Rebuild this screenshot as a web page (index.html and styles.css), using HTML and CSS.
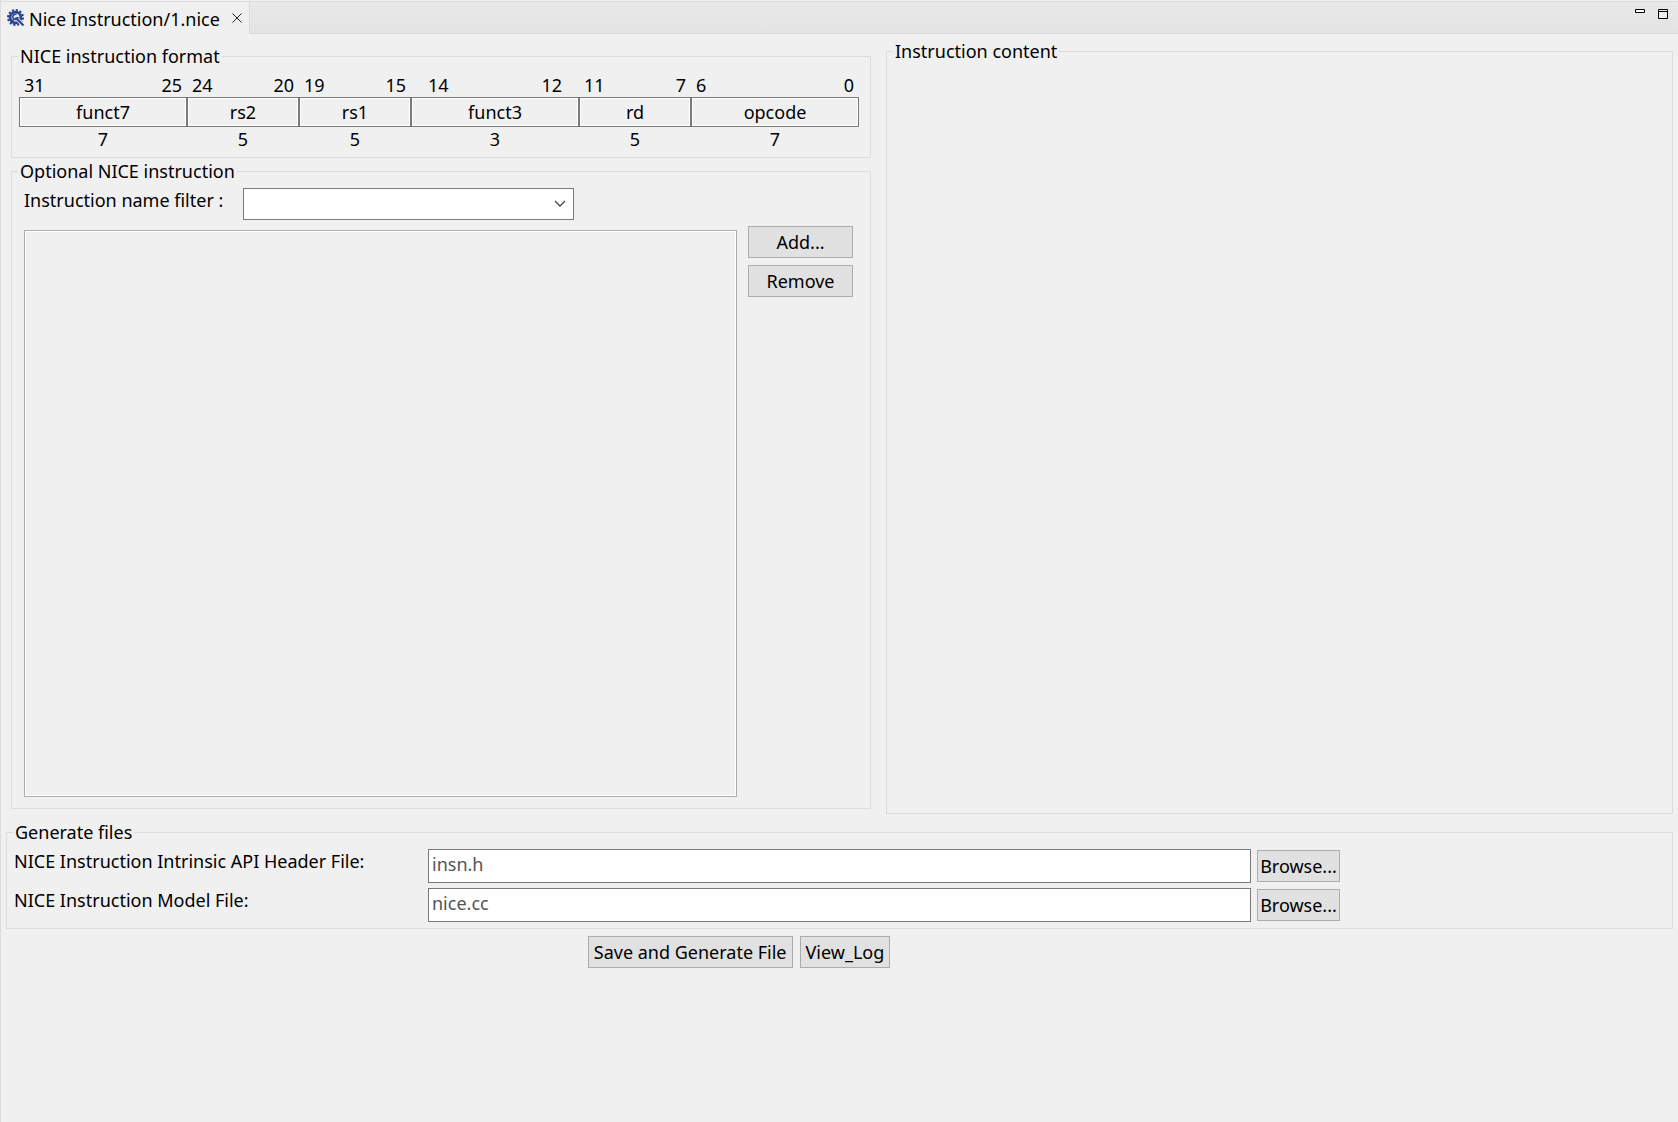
FILE: index.html
```html
<!DOCTYPE html>
<html lang="en">
<head>
<meta charset="utf-8">
<title>Nice Instruction/1.nice</title>
<link rel="stylesheet" href="styles.css">
</head>
<body>
<div class="editor">
  <header class="tabbar">
    <div class="tab">
      <svg class="tab-icon" width="18" height="18" viewBox="0 0 18 18" aria-hidden="true">
        <circle cx="8.500" cy="8.500" r="7.400" fill="none" stroke="#2b4593" stroke-width="2.200" stroke-dasharray="2.200 1.674"/>
        <circle cx="8.500" cy="8.500" r="5.400" fill="none" stroke="#2b4593" stroke-width="2.800"/>
        <path d="M9.500 5.500a2.600 2.600 0 1 0 1.500 2.500M6.500 10.500 5.500 12" fill="none" stroke="#2b4593" stroke-width="1.600"/>
        <path d="M11 11l6 6" stroke="#f0f0f0" stroke-width="3.600"/>
        <path d="M8.500 8.500l8 8" stroke="#2b4593" stroke-width="2.200"/>
      </svg>
      <span class="tab-title">Nice Instruction/1.nice</span>
      <button class="icon-button" type="button" aria-label="Close">
        <svg width="10" height="10" viewBox="0 0 10 10"><path d="M.5.5l9 9M9.500.5l-9 9" stroke="#222" fill="none"/></svg>
      </button>
    </div>
    <div class="window-controls">
      <button class="icon-button" type="button" aria-label="Minimize">
        <svg width="10" height="10" viewBox="0 0 10 10"><path d="M.5.5h9v3h-9z" stroke="#000" fill="#fff"/></svg>
      </button>
      <button class="icon-button" type="button" aria-label="Maximize">
        <svg width="10" height="10" viewBox="0 0 10 10"><path d="M.5.5h9v9h-9zM.5 2.500h9" stroke="#000" fill="#f0f0f0"/></svg>
      </button>
    </div>
  </header>

  <main class="content">
    <div class="columns">
      <div class="left">
        <fieldset class="group">
          <legend>NICE instruction format</legend>
          <div class="fields">
            <div class="field"><div class="bits"><span>31</span><span>25</span></div><div class="cell">funct7</div><div class="size">7</div></div>
            <div class="field"><div class="bits"><span>24</span><span>20</span></div><div class="cell">rs2</div><div class="size">5</div></div>
            <div class="field"><div class="bits"><span>19</span><span>15</span></div><div class="cell">rs1</div><div class="size">5</div></div>
            <div class="field"><div class="bits inset"><span>14</span><span>12</span></div><div class="cell">funct3</div><div class="size">3</div></div>
            <div class="field"><div class="bits"><span>11</span><span>7</span></div><div class="cell">rd</div><div class="size">5</div></div>
            <div class="field"><div class="bits"><span>6</span><span>0</span></div><div class="cell">opcode</div><div class="size">7</div></div>
          </div>
        </fieldset>

        <fieldset class="group">
          <legend>Optional NICE instruction</legend>
          <div class="optional">
            <div class="filter">
              <label for="filter">Instruction name filter :</label>
              <div class="combo">
                <select id="filter"><option></option></select>
                <svg class="chevron" width="12" height="7" viewBox="0 0 12 7" aria-hidden="true"><path d="M1 1l5 5 5-5" stroke="#444" stroke-width="1.300" fill="none"/></svg>
              </div>
            </div>
            <div class="picker">
              <select class="list" size="10" aria-label="Optional NICE instruction"></select>
              <div class="actions">
                <button class="button" type="button">Add...</button>
                <button class="button" type="button">Remove</button>
              </div>
            </div>
          </div>
        </fieldset>
      </div>

      <fieldset class="group">
        <legend>Instruction content</legend>
      </fieldset>
    </div>

    <fieldset class="group generate">
      <legend>Generate files</legend>
      <div class="files">
        <div class="file-row">
          <label for="header-file">NICE Instruction Intrinsic API Header File:</label>
          <input id="header-file" type="text" value="insn.h">
          <button class="button" type="button">Browse...</button>
        </div>
        <div class="file-row">
          <label for="model-file">NICE Instruction Model File:</label>
          <input id="model-file" type="text" value="nice.cc">
          <button class="button" type="button">Browse...</button>
        </div>
      </div>
    </fieldset>

    <div class="footer">
      <button class="button" type="button">Save and Generate File</button>
      <button class="button" type="button">View_Log</button>
    </div>
  </main>
</div>
</body>
</html>
```

FILE: styles.css
```css
* {
  box-sizing: border-box;
}

body {
  margin: 0;
  background: #f0f0f0;
  color: #000;
  font: 18px/24px "Noto Sans", "Open Sans", sans-serif;
}

button,
input,
select {
  margin: 0;
  font: inherit;
  color: inherit;
  border-radius: 0;
}

.editor {
  min-height: 100vh;
  padding-top: 1px;
  border-left: 1px solid #dcdcdc;
}

.tabbar {
  display: flex;
  justify-content: space-between;
  height: 33px;
  border-top: 1px solid #dcdcdc;
  border-bottom: 1px solid #dadada;
  background: linear-gradient(#e9e9e9, #e3e3e3);
}

.tab {
  display: flex;
  align-items: center;
  height: 32px;
  padding: 0 7px 0 6px;
  border-right: 1px solid #dadada;
  background: #f0f0f0;
}

.tab-icon {
  margin-right: 4px;
}

.tab-title {
  margin-right: 12px;
  padding-top: 2px;
}

.icon-button {
  display: flex;
  padding: 0;
  border: 0;
  background: none;
}

.window-controls {
  display: flex;
  gap: 13px;
  align-items: flex-start;
  padding: 7px 10px 0 0;
}

.content {
  padding: 5px 5px 8px;
}

.columns {
  display: grid;
  grid-template-columns: minmax(0, 860fr) minmax(0, 787fr);
  gap: 15px;
  padding-left: 5px;
}

.left {
  display: flex;
  flex-direction: column;
  gap: 1px;
  padding: 5px 0;
}

.group {
  min-width: 0;
  margin: 0;
  padding: 0;
  border: 1px solid #dcdcdc;
}

.group legend {
  margin-left: 6px;
  padding: 0 2px;
}

.fields {
  display: grid;
  grid-template-columns: 3fr 2fr 2fr 3fr 2fr 3fr;
  padding: 5px 11px 6px 7px;
}

.field {
  text-align: center;
}

.bits {
  display: flex;
  justify-content: space-between;
  padding: 0 5px;
}

.bits.inset {
  padding: 0 17px;
}

.cell {
  height: 30px;
  padding-top: 2px;
  border: 1px solid #7a7a7a;
  box-shadow: inset 0 0 0 1px #fff;
}

.optional {
  padding: 5px 17px 11px 12px;
}

.filter {
  display: flex;
  margin-bottom: 6px;
}

.filter label {
  width: 219px;
}

.combo {
  position: relative;
  width: 331px;
  height: 32px;
}

.combo select {
  width: 100%;
  height: 100%;
  padding: 0 30px 0 4px;
  border: 1px solid #7a7a7a;
  background: #fff;
  appearance: none;
}

.chevron {
  position: absolute;
  top: 12px;
  right: 8px;
  pointer-events: none;
}

.picker {
  display: flex;
  gap: 11px;
}

.list {
  flex: 1;
  min-width: 0;
  height: 567px;
  margin-top: 4px;
  border: 1px solid #abadb3;
  background: #f0f0f0;
  box-shadow: inset 0 0 0 1px #fff;
}

.actions {
  display: flex;
  flex-direction: column;
  gap: 7px;
  width: 105px;
}

.button {
  height: 32px;
  padding: 0 5px;
  border: 1px solid #adadad;
  background: #e1e1e1;
  white-space: nowrap;
}

.generate {
  margin-top: 6px;
}

.files {
  display: grid;
  gap: 5px;
  padding: 5px 0 6px 7px;
}

.file-row {
  display: grid;
  grid-template-columns: minmax(0, 414fr) minmax(0, 823fr) 89px minmax(0, 332fr);
  align-items: center;
}

.file-row label {
  align-self: start;
}

.file-row input {
  height: 34px;
  padding: 0 3px 4px;
  border: 1px solid #7a7a7a;
  background: #fff;
  color: #555;
}

.file-row .button {
  margin-left: 6px;
  padding: 0;
}

.footer {
  display: flex;
  gap: 7px;
  margin-top: 7px;
  padding-left: 34.9%;
}
```
